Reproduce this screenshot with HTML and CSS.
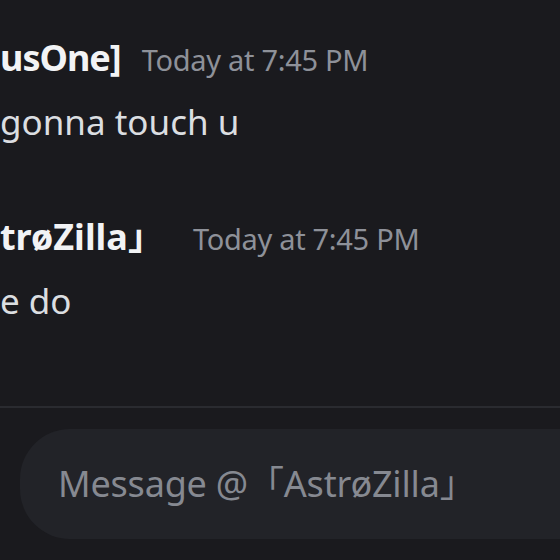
FILE: index.html
```html
<!DOCTYPE html>
<html>
<head>
<meta charset="utf-8">
<link rel="stylesheet" href="styles.css">
</head>
<body>
<div class="screen">
  <div class="messages">
    <div class="message">
      <div class="header">
        <span class="name">usOne]</span>
        <span class="time">Today at 7:45 PM</span>
      </div>
      <div class="text">gonna touch u</div>
    </div>
    <div class="message">
      <div class="header">
        <span class="name name-wide">trøZilla」</span>
        <span class="time time-wide">Today at 7:45 PM</span>
      </div>
      <div class="text">e do</div>
    </div>
  </div>
  <div class="divider"></div>
  <div class="composer">
    <div class="input">
      <span class="placeholder">Message @「AstrøZilla」</span>
    </div>
  </div>
</div>
</body>
</html>
```
FILE: styles.css
```css
html, body {
  margin: 0;
  padding: 0;
  background: #1a1a1e;
}
.screen {
  width: 560px;
  height: 560px;
  overflow: hidden;
  display: flex;
  flex-direction: column;
  font-family: "Noto Sans", "Noto Sans CJK JP", sans-serif;
}
.messages {
  padding-top: 36px;
  display: flex;
  flex-direction: column;
  gap: 71px;
}
.header {
  display: flex;
  align-items: baseline;
  gap: 21px;
  line-height: 44px;
  white-space: nowrap;
}
.name {
  color: #f2f3f5;
  font-size: 36px;
  font-weight: 700;
  letter-spacing: -1px;
}
.name-wide {
  letter-spacing: 0;
}
.time {
  color: #8e9199;
  font-size: 29px;
  letter-spacing: -0.3px;
}
.time-wide {
  margin-left: 8px;
}
.text {
  margin-top: 18px;
  color: #dbdee1;
  font-size: 35px;
  line-height: 44px;
  letter-spacing: 0;
  white-space: nowrap;
}
.divider {
  margin-top: 83px;
  height: 2px;
  background: #2a2b30;
}
.composer {
  padding: 21px 0 0 20px;
}
.input {
  height: 110px;
  border-radius: 50px 0 0 50px;
  background: #222328;
  display: flex;
  align-items: center;
  padding-left: 38px;
  padding-bottom: 6px;
  box-sizing: border-box;
}
.placeholder {
  color: #868991;
  font-size: 36px;
  white-space: nowrap;
  letter-spacing: -0.2px;
}
```
